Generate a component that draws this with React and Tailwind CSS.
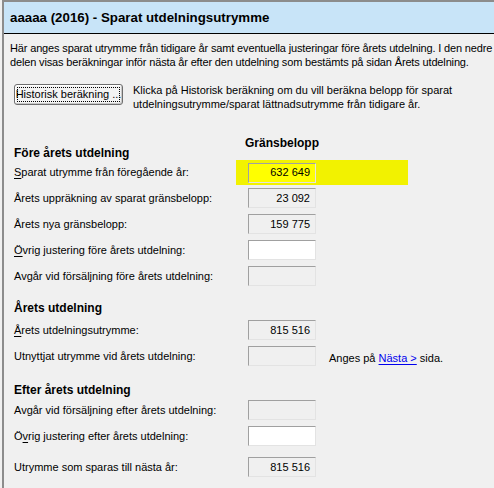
import React from 'react';

const font = { fontFamily: '"Liberation Sans", Arial, sans-serif' };

const Box = ({ value, white, yellow }) => {
  const bg = yellow ? 'bg-[#ffff00]' : white ? 'bg-white' : 'bg-[#f0f0f0]';
  return (
    <div
      className={`w-[68px] h-[20px] ${bg} border border-t-[#a0a0a0] border-l-[#a0a0a0] border-b-[#e3e3e3] border-r-[#e3e3e3] flex items-center justify-end pr-[5px] text-[11px] text-black`}
    >
      {value}
    </div>
  );
};

const Row = ({ label, value, white, yellow, extra, className = '' }) => (
  <div className={`flex items-center h-[20px] ${className}`}>
    <div className={`whitespace-nowrap ${yellow ? 'w-[222px]' : 'w-[234px]'}`}>{label}</div>
    {yellow ? (
      <div className="bg-[#f2f200] pl-[12px] pr-[92px] pt-[3px] pb-[2px]">
        <Box value={value} yellow />
      </div>
    ) : (
      <Box value={value} white={white} />
    )}
    {extra}
  </div>
);

const Heading = ({ children, className = '' }) => (
  <div className={`font-bold text-[12px] leading-[14px] whitespace-nowrap ${className}`}>
    {children}
  </div>
);

export default function App() {
  return (
    <div className="w-[494px] h-[488px] bg-[#f0f0f0] overflow-hidden text-black text-[11px]" style={font}>
      <div className="h-full ml-[2px] border-l-2 border-t-2 border-[#8c8c8c]">
        <div className="h-[32px] bg-[#c8e4f8] border-b border-black flex items-center pl-[6px] pt-[1px]">
          <span className="font-bold text-[13.3px]">aaaaa (2016) - Sparat utdelningsutrymme</span>
        </div>

        <div className="pl-[6px] pt-[7px]">
          <p className="leading-[14px] whitespace-nowrap tracking-[-0.15px]">
            Här anges sparat utrymme från tidigare år samt eventuella justeringar före årets utdelning. I den nedre
            <br />
            delen visas beräkningar inför nästa år efter den utdelning som bestämts på sidan Årets utdelning.
          </p>

          <div className="flex items-start mt-[15px] pl-[4px]">
            <button className="w-[109px] h-[21px] shrink-0 bg-[#f3f3f3] border border-[#6e6e6e] rounded-[3px] p-[2px] shadow-[inset_-1px_-1px_0_#c8c8c8,inset_1px_1px_0_#ffffff]">
              <span className="h-full flex items-center justify-center border border-dotted border-black text-[11px] whitespace-nowrap">
                Historisk beräkning ...
              </span>
            </button>
            <div className="ml-[10px] leading-[14px] -mt-[1px] whitespace-nowrap">
              Klicka på Historisk beräkning om du vill beräkna belopp för sparat
              <br />
              utdelningsutrymme/sparat lättnadsutrymme från tidigare år.
            </div>
          </div>

          <div className="pl-[4px]">
            <div className="pl-[231px] mt-[25px]">
              <div className="font-bold text-[12px] leading-[14px]">Gränsbelopp</div>
            </div>
            <Heading className="-mt-[4px]">Före årets utdelning</Heading>

            <Row
              className="mt-[2px]"
              yellow
              value="632 649"
              label={<><u className="underline-offset-2">S</u>parat utrymme från föregående år:</>}
            />
            <Row className="mt-[6px]" value="23 092" label="Årets uppräkning av sparat gränsbelopp:" />
            <Row className="mt-[6px]" value="159 775" label="Årets nya gränsbelopp:" />
            <Row
              className="mt-[6px]"
              white
              label={<><u className="underline-offset-2">Ö</u>vrig justering före årets utdelning:</>}
            />
            <Row className="mt-[6px]" label="Avgår vid försäljning före årets utdelning:" />

            <Heading className="mt-[15px]">Årets utdelning</Heading>
            <Row
              className="mt-[5px]"
              value="815 516"
              label={<><u className="underline-offset-2">Å</u>rets utdelningsutrymme:</>}
            />
            <Row
              className="mt-[6px]"
              label="Utnyttjat utrymme vid årets utdelning:"
              extra={
                <span className="ml-[13px] mt-[5px] whitespace-nowrap">
                  Anges på <a className="text-[#0000ee] underline underline-offset-2 cursor-pointer">Nästa &gt;</a> sida.
                </span>
              }
            />

            <Heading className="mt-[17px]">Efter årets utdelning</Heading>
            <Row className="mt-[3px]" label="Avgår vid försäljning efter årets utdelning:" />
            <Row
              className="mt-[6px]"
              white
              label={<>Ö<u className="underline-offset-2">v</u>rig justering efter årets utdelning:</>}
            />
            <Row className="mt-[11px]" value="815 516" label="Utrymme som sparas till nästa år:" />
          </div>
        </div>
      </div>
    </div>
  );
}
